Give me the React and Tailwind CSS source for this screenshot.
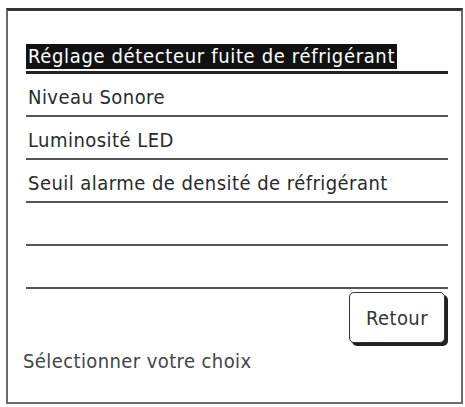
const items = [
  "Niveau Sonore",
  "Luminosité LED",
  "Seuil alarme de densité de réfrigérant",
  "",
  "",
];

const font = { fontFamily: '"DejaVu Sans Condensed", "DejaVu Sans", sans-serif' };

export default function App() {
  return (
    <div className="w-[465px] h-[407px] bg-white pt-[8px] pl-[6px]" style={font}>
      <div className="w-[457px] h-[396px] border-2 border-t-[3px] border-[#6a6a6a] border-t-[#333] flex flex-col pl-[18px] pr-[13px] pt-[33px]">
        {/* selected row */}
        <div className="flex flex-col">
          <div className="h-[25px] self-start bg-[#111] text-white text-[20px] leading-[25px] px-[2px] tracking-[0.65px]">
            Réglage détecteur fuite de réfrigérant
          </div>
          <div className="mt-[2px] h-[3px] bg-[#222]" />
        </div>

        {/* other rows */}
        {items.map((label, i) => (
          <div
            key={i}
            className="h-[43px] border-b-2 border-[#555] flex items-end pb-[8px] pl-[2px] text-[20px] leading-none text-[#2a2a2a] tracking-[0.45px]"
          >
            {label}
          </div>
        ))}

        {/* button */}
        <div className="flex justify-end mt-[3px]">
          <button className="w-[96px] h-[51px] mr-[3px] rounded-[5px] border-[1.5px] border-[#333] bg-white shadow-[3px_3px_0_#222] text-[20px] text-[#333] tracking-[0.4px]">
            Retour
          </button>
        </div>

        <div className="mt-[8px] -ml-[3px] text-[20px] leading-none text-[#444] tracking-[0.4px]">
          Sélectionner votre choix
        </div>
      </div>
    </div>
  );
}
